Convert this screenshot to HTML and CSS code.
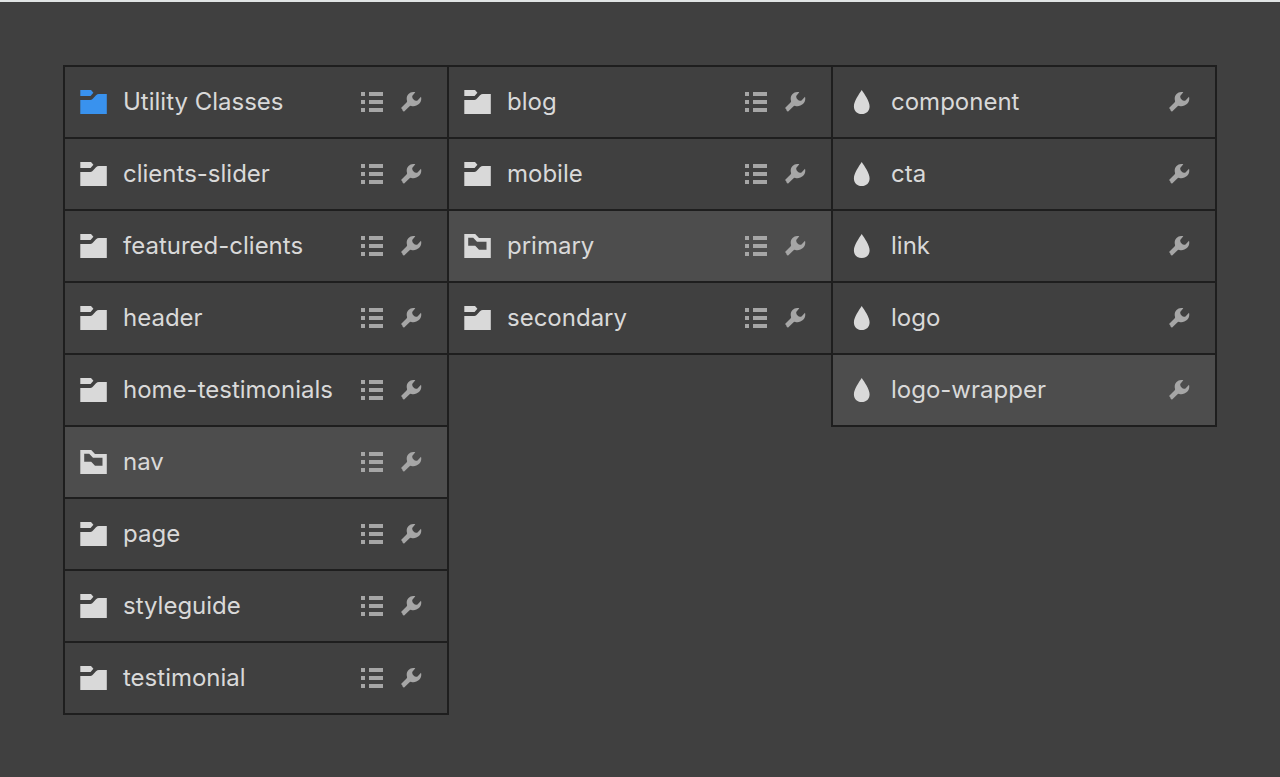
FILE: index.html
```
<!DOCTYPE html>
<html lang="en">
<head>
<meta charset="utf-8">
<meta name="viewport" content="width=device-width, initial-scale=1">
<title>Class browser</title>
<link rel="stylesheet" href="styles.css">
</head>
<body>
<svg class="sprite" aria-hidden="true">
  <symbol id="folder" viewBox="0 0 27 24"><path d="M0.3 0H11L13.4 2.7L10.6 6H0.3Z"/><path d="M0.3 10H9C11 10 12 9.400 13 8.400L16 5.200Q17.200 4 19 4H26.800V24H0.300Z"/></symbol>
  <symbol id="folder-open" viewBox="0 0 27 24"><path fill-rule="evenodd" d="M0.3 0H11.200L15 4H26.800V24H0.300ZM4.200 3.800V11.800H11.200L15 15.800H22.500V7.700H13L9.200 3.800Z"/></symbol>
  <symbol id="drop" viewBox="0 0 27 24"><path d="M13.700 0C16.500 4 21.600 11.500 21.600 16.200C21.600 21 18.400 24 13.700 24C9 24 5.900 21 5.900 16.200C5.900 11.500 11 4 13.700 0Z"/></symbol>
  <symbol id="list" viewBox="0 0 22 20"><path d="M0 0H4V4H0ZM8 0H22V4H8ZM0 8H4V12H0ZM8 8H22V12H8ZM0 16H4V20H0ZM8 16H22V20H8Z"/></symbol>
  <symbol id="wrench" viewBox="0 0 21 20"><path d="M14.300 0.200C9 -1 4.500 3.200 6 8.800C6.200 9.600 6 10.100 5.500 10.600L0 15.900L1.500 17.500L1.100 17.900L2.900 19.700L8.300 14.500C8.900 13.900 9.500 13.700 10.300 13.900C16 15.300 21.600 10.800 20 4.800L16.500 8.400C15.200 9.300 13.800 8.800 12.600 7.600C11.400 6.400 10.900 5 11.400 3.700Z"/></symbol>
</svg>
<main class="browser">
  <ul class="column" aria-label="Groups">
    <li class="row"><button class="name"><svg class="icon accent"><use href="#folder"/></svg>Utility Classes</button><button class="tool" aria-label="List"><svg class="list"><use href="#list"/></svg></button><button class="tool" aria-label="Edit"><svg class="wrench"><use href="#wrench"/></svg></button></li>
    <li class="row"><button class="name"><svg class="icon"><use href="#folder"/></svg>clients-slider</button><button class="tool" aria-label="List"><svg class="list"><use href="#list"/></svg></button><button class="tool" aria-label="Edit"><svg class="wrench"><use href="#wrench"/></svg></button></li>
    <li class="row"><button class="name"><svg class="icon"><use href="#folder"/></svg>featured-clients</button><button class="tool" aria-label="List"><svg class="list"><use href="#list"/></svg></button><button class="tool" aria-label="Edit"><svg class="wrench"><use href="#wrench"/></svg></button></li>
    <li class="row"><button class="name"><svg class="icon"><use href="#folder"/></svg>header</button><button class="tool" aria-label="List"><svg class="list"><use href="#list"/></svg></button><button class="tool" aria-label="Edit"><svg class="wrench"><use href="#wrench"/></svg></button></li>
    <li class="row"><button class="name"><svg class="icon"><use href="#folder"/></svg>home-testimonials</button><button class="tool" aria-label="List"><svg class="list"><use href="#list"/></svg></button><button class="tool" aria-label="Edit"><svg class="wrench"><use href="#wrench"/></svg></button></li>
    <li class="row selected"><button class="name"><svg class="icon"><use href="#folder-open"/></svg>nav</button><button class="tool" aria-label="List"><svg class="list"><use href="#list"/></svg></button><button class="tool" aria-label="Edit"><svg class="wrench"><use href="#wrench"/></svg></button></li>
    <li class="row"><button class="name"><svg class="icon"><use href="#folder"/></svg>page</button><button class="tool" aria-label="List"><svg class="list"><use href="#list"/></svg></button><button class="tool" aria-label="Edit"><svg class="wrench"><use href="#wrench"/></svg></button></li>
    <li class="row"><button class="name"><svg class="icon"><use href="#folder"/></svg>styleguide</button><button class="tool" aria-label="List"><svg class="list"><use href="#list"/></svg></button><button class="tool" aria-label="Edit"><svg class="wrench"><use href="#wrench"/></svg></button></li>
    <li class="row"><button class="name"><svg class="icon"><use href="#folder"/></svg>testimonial</button><button class="tool" aria-label="List"><svg class="list"><use href="#list"/></svg></button><button class="tool" aria-label="Edit"><svg class="wrench"><use href="#wrench"/></svg></button></li>
  </ul>
  <ul class="column" aria-label="nav">
    <li class="row"><button class="name"><svg class="icon"><use href="#folder"/></svg>blog</button><button class="tool" aria-label="List"><svg class="list"><use href="#list"/></svg></button><button class="tool" aria-label="Edit"><svg class="wrench"><use href="#wrench"/></svg></button></li>
    <li class="row"><button class="name"><svg class="icon"><use href="#folder"/></svg>mobile</button><button class="tool" aria-label="List"><svg class="list"><use href="#list"/></svg></button><button class="tool" aria-label="Edit"><svg class="wrench"><use href="#wrench"/></svg></button></li>
    <li class="row selected"><button class="name"><svg class="icon"><use href="#folder-open"/></svg>primary</button><button class="tool" aria-label="List"><svg class="list"><use href="#list"/></svg></button><button class="tool" aria-label="Edit"><svg class="wrench"><use href="#wrench"/></svg></button></li>
    <li class="row"><button class="name"><svg class="icon"><use href="#folder"/></svg>secondary</button><button class="tool" aria-label="List"><svg class="list"><use href="#list"/></svg></button><button class="tool" aria-label="Edit"><svg class="wrench"><use href="#wrench"/></svg></button></li>
  </ul>
  <ul class="column" aria-label="primary">
    <li class="row"><button class="name"><svg class="icon"><use href="#drop"/></svg>component</button><button class="tool" aria-label="Edit"><svg class="wrench"><use href="#wrench"/></svg></button></li>
    <li class="row"><button class="name"><svg class="icon"><use href="#drop"/></svg>cta</button><button class="tool" aria-label="Edit"><svg class="wrench"><use href="#wrench"/></svg></button></li>
    <li class="row"><button class="name"><svg class="icon"><use href="#drop"/></svg>link</button><button class="tool" aria-label="Edit"><svg class="wrench"><use href="#wrench"/></svg></button></li>
    <li class="row"><button class="name"><svg class="icon"><use href="#drop"/></svg>logo</button><button class="tool" aria-label="Edit"><svg class="wrench"><use href="#wrench"/></svg></button></li>
    <li class="row selected"><button class="name"><svg class="icon"><use href="#drop"/></svg>logo-wrapper</button><button class="tool" aria-label="Edit"><svg class="wrench"><use href="#wrench"/></svg></button></li>
  </ul>
</main>
</body>
</html>
```
FILE: styles.css
```
* {
  box-sizing: border-box;
}

body {
  margin: 0;
  min-height: 100vh;
  border-top: 2px solid #e1e4e4;
  background: #404040;
  color: #d9d9d9;
  font-family: Inter, "Liberation Sans", sans-serif;
  font-size: 24px;
  font-weight: 400;
  line-height: 32px;
}

.sprite {
  display: none;
}

.browser {
  display: flex;
  align-items: flex-start;
  padding: 63px 63px 61px;
}

.column {
  flex: 1;
  min-width: 0;
  margin: 0;
  padding: 0;
  list-style: none;
  border: 2px solid #1e1e1e;
  border-bottom: 0;
}

.column + .column {
  margin-left: -2px;
}

.row {
  display: flex;
  align-items: center;
  gap: 18px;
  padding: 0 25px 0 15px;
  border-bottom: 2px solid #1e1e1e;
}

.selected {
  background: #4d4d4d;
}

button {
  display: flex;
  align-items: center;
  padding: 0;
  border: 0;
  background: none;
  color: inherit;
  font: inherit;
  cursor: pointer;
}

.name {
  flex: 1;
  min-width: 0;
  gap: 16px;
  padding: 19px 0;
  white-space: nowrap;
}

.tool {
  color: #a6a6a6;
}

svg {
  flex: none;
  fill: currentColor;
}

.icon {
  width: 27px;
  height: 24px;
}

.accent {
  color: #3992ee;
}

.list {
  width: 22px;
  height: 20px;
}

.wrench {
  width: 21px;
  height: 20px;
}
```
